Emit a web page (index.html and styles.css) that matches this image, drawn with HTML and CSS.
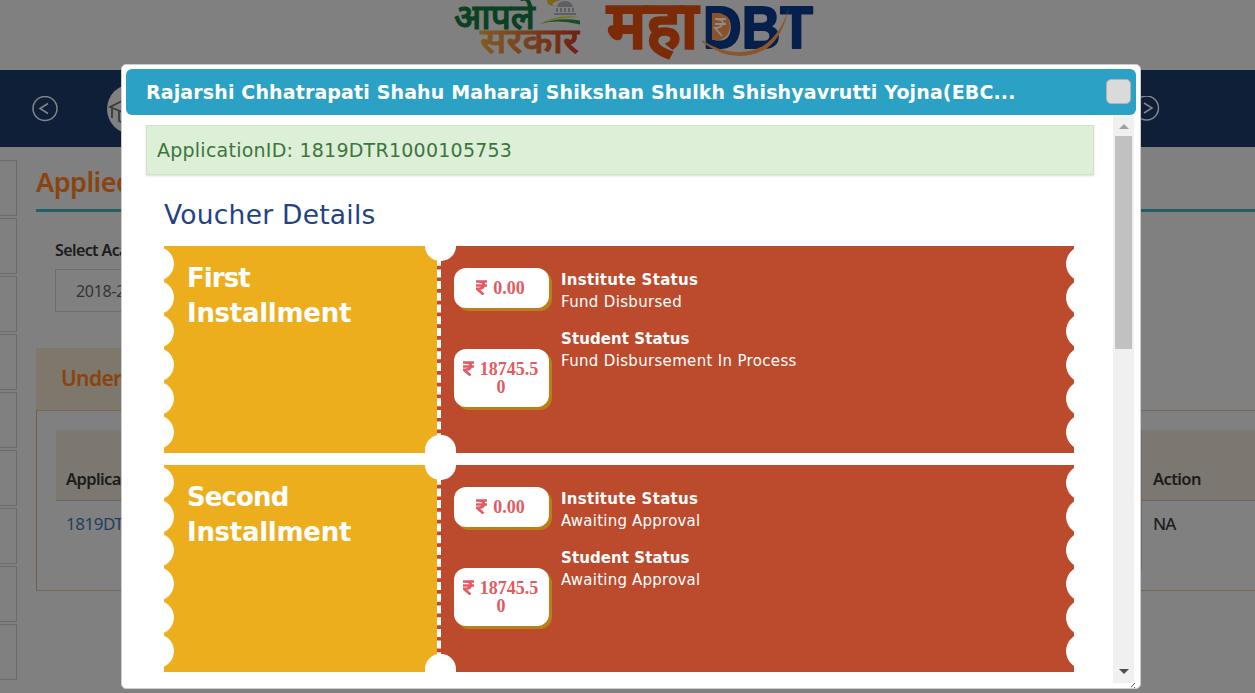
FILE: index.html
```
<!DOCTYPE html>
<html lang="en">
<head>
<meta charset="utf-8">
<title>MahaDBT - Voucher Details</title>
<link rel="stylesheet" href="styles.css">
</head>
<body>
<div class="page">
  <header class="brand">
    <svg class="brand-logo" width="370" height="70" viewBox="0 0 370 70">
      <defs>
        <linearGradient id="sarkar" x1="0" x2="1"><stop offset="0" stop-color="#805c24"/><stop offset="1" stop-color="#702014"/></linearGradient>
      </defs>
      <text class="deva" transform="translate(0 29) scale(1 1.22)" x="4" y="0" font-size="29" fill="#0b4021" stroke="#0b4021" stroke-width=".9" textLength="81" lengthAdjust="spacingAndGlyphs">आपले</text>
      <text class="deva" transform="translate(0 53) scale(1 1.26)" x="30" y="0" font-size="28" fill="url(#sarkar)" stroke="url(#sarkar)" stroke-width=".7" textLength="99" lengthAdjust="spacingAndGlyphs">सरकार</text>
      <path d="M97 0 Q97 6 104 6 Q99 3 111 0Z" fill="#7d6419"/>
      <path d="M104 15v-2h22v2zM106 12v-4h2v4zM110 12v-4h2v4zM114 12v-4h2v4zM118 12v-4h2v4zM122 12v-4h2v4zM107 7q1-6 8-6t8 6z" fill="#5d5f63"/>
      <path d="M90 24 Q107 14 130 17 Q109 17 90 24Z" fill="#76731c"/>
      <path d="M90 24 Q108 17 130 20.5 V24.500Q107 19 90 24Z" fill="#174f29"/>
      <text class="deva" transform="translate(0 48) scale(1 1.32)" x="157" y="0" font-size="50" fill="#7b2b08" stroke="#7b2b08" stroke-width="2.500" textLength="91" lengthAdjust="spacingAndGlyphs">महा</text>
      <text class="latin" x="253" y="48" font-size="59" fill="#071f4b" stroke="#071f4b" stroke-width="2" stroke-linejoin="round" textLength="110" lengthAdjust="spacingAndGlyphs">DBT</text>
      <path d="M262 13h8q10 3 10 13t-10 14h-8z" fill="#8b5129"/>
      <path d="M265 19h11M265 24h11M267 19q8 1 5 6q-2 3-7 3l7 8" fill="none" stroke="#8c8c8c" stroke-width="1.800"/>
      <path d="M252 40 Q283 61 313 46 Q332 33 339 7 Q333 37 316 49 Q284 66 252 42Z" fill="#8b552d"/>
    </svg>
  </header>
  <nav class="carousel">
    <svg class="arrow" width="26" height="26" viewBox="0 0 26 26"><circle cx="13" cy="12.500" r="12"/><path d="M16 7.500 8 12.500l8 5"/></svg>
    <span class="category"><svg width="50" height="50" viewBox="0 0 50 50"><path d="M3 23 25 12 47 23 25 32ZM5 24v10M12 27v10q12 7 26 0V27M17 25v-5"/></svg></span>
    <svg class="arrow next" width="26" height="26" viewBox="0 0 26 26"><circle cx="12.500" cy="12" r="12"/><path d="M10 7 18 12l-8 5"/></svg>
  </nav>
  <div class="body">
    <aside class="side"><i></i><i></i><i></i><i></i><i></i><i></i><i></i><i></i><i></i></aside>
    <main class="content">
      <h1>Applied Scheme</h1>
      <div class="filter">
        <label>Select Academic Year</label>
        <div class="select">2018-2019</div>
      </div>
      <h2>Under Scrutiny</h2>
      <section class="panel">
        <div class="table">
          <div class="col id"><b>Application ID</b><a>1819DTR1000105753</a></div>
          <div class="col act"><b>Action</b><span>NA</span></div>
        </div>
      </section>
    </main>
  </div>
</div>

<div class="dialog">
  <div class="titlebar"><span class="title">Rajarshi Chhatrapati Shahu Maharaj Shikshan Shulkh Shishyavrutti Yojna(EBC...</span><button class="close" aria-label="Close"></button></div>
  <div class="viewport">
    <div class="scroll">
      <div class="notice"><span>ApplicationID: 1819DTR1000105753</span></div>
      <h3>Voucher Details</h3>
      <div class="vouchers">
        <article class="voucher">
          <div class="name"><span>First</span><span class="wide">Installment</span></div>
          <div class="detail">
            <div class="row"><div class="price"><svg class="rupee" viewBox="0 0 11 15"><path d="M0 1.500h11M0 5.500h11M2 1.500q6 0 6 3.500T2 8.800H1l6.500 5.700"/></svg>0.00</div><div class="status"><b>Institute Status</b><span>Fund Disbursed</span></div></div>
            <div class="row"><div class="price low"><svg class="rupee" viewBox="0 0 11 15"><path d="M0 1.500h11M0 5.500h11M2 1.500q6 0 6 3.500T2 8.800H1l6.500 5.700"/></svg>18745.50</div><div class="status"><b class="student">Student Status</b><span>Fund Disbursement In Process</span></div></div>
          </div>
          <i class="notch top"></i><i class="notch bottom"></i>
        </article>
        <article class="voucher">
          <div class="name"><span>Second</span><span class="wide">Installment</span></div>
          <div class="detail">
            <div class="row"><div class="price"><svg class="rupee" viewBox="0 0 11 15"><path d="M0 1.500h11M0 5.500h11M2 1.500q6 0 6 3.500T2 8.800H1l6.500 5.700"/></svg>0.00</div><div class="status"><b>Institute Status</b><span class="await">Awaiting Approval</span></div></div>
            <div class="row"><div class="price low"><svg class="rupee" viewBox="0 0 11 15"><path d="M0 1.500h11M0 5.500h11M2 1.500q6 0 6 3.500T2 8.800H1l6.500 5.700"/></svg>18745.50</div><div class="status"><b class="student">Student Status</b><span class="await">Awaiting Approval</span></div></div>
          </div>
          <i class="notch top"></i><i class="notch bottom"></i>
        </article>
      </div>
    </div>
    <div class="scrollbar"><i class="up"></i><i class="thumb"></i><i class="down"></i></div>
  </div>
  <svg class="grip" width="5" height="5" viewBox="0 0 5 5"><path d="M0 4.500 3 1M3 .5h1M3 4.500h1" stroke="#555" fill="none"/></svg>
</div>
</body>
</html>
```
FILE: styles.css
```
* { box-sizing: border-box; }
body { margin: 0; width: 1255px; height: 693px; overflow: hidden; background: #808080; font-family: "DejaVu Sans", sans-serif; }
i { display: block; }
.page { height: 693px; overflow: hidden; font-family: "Noto Sans", "Open Sans", sans-serif; white-space: nowrap; }

.brand { height: 70px; padding-left: 450px; }
.brand-logo { display: block; }
.deva { font-family: "Noto Sans Devanagari", "Noto Sans", sans-serif; font-weight: 500; }
.latin { font-family: "Liberation Sans", sans-serif; font-weight: 700; }

.carousel { height: 77px; background: #101f38; display: flex; align-items: center; padding: 0 95px 0 32px; }
.arrow { fill: none; stroke: #80858c; stroke-width: 1.5; }
.arrow.next { margin-left: auto; }
.category { width: 50px; height: 50px; margin-left: 49px; border-radius: 50%; background: #808080; overflow: hidden; }
.category svg { fill: none; stroke: #363c3c; stroke-width: 1.8; display: block; }

.body { display: flex; height: 546px; }
.side { width: 17px; padding-top: 13px; display: flex; flex-direction: column; gap: 2px; }
.side i { height: 56px; border: 1px solid #6c6c6c; border-left: 0; }
.content { flex: 1; padding: 17px 0 0 19px; }
h1 { margin: 0; height: 48px; border-bottom: 3px solid #236063; color: #8b4310; font-size: 27px; line-height: 35px; font-weight: 600; letter-spacing: -.5px; }
.filter { padding: 27px 0 0 19px; height: 136px; }
.filter label { display: block; height: 30px; font-size: 16px; line-height: 22px; font-weight: 600; color: #1b1b1b; letter-spacing: -.6px; }
.select { width: 300px; height: 43px; border: 1px solid #6d6d6d; padding-left: 20px; font-size: 16px; line-height: 43px; color: #333; letter-spacing: -.3px; }
h2 { margin: 0; height: 62px; padding-left: 25px; background: #7e776c; color: #8b4310; font-size: 21px; line-height: 60px; font-weight: 600; letter-spacing: -.6px; width: 500px; }
.panel { height: 181px; border: 1px solid #77685a; border-left-color: #77584a; border-right: 0; }
.table { display: flex; justify-content: space-between; padding: 19px 0 0 19px; }
.col { height: 140px; }
.col b { display: flex; height: 71px; padding-top: 37px; background: #7c7771; border-bottom: 1px solid #6a6560; font-size: 16.500px; line-height: 24px; font-weight: 600; color: #1b1b1b; letter-spacing: -.6px; }
.col a, .col span { display: block; padding-top: 11px; font-size: 17px; line-height: 24px; color: #203f5c; letter-spacing: -.5px; }
.col.id { width: 500px; }
.col.id b, .col.id a { padding-left: 10px; }
.col.act { width: 114px; border-left: 1px solid #6e6e6e; }
.col.act b, .col.act span { padding-left: 11px; }
.col.act span { color: #202020; font-weight: 500; letter-spacing: -1px; }

.dialog { position: absolute; left: 121px; top: 64px; width: 1020px; height: 625px; background: #fff; border: 1px solid #ccc; border-radius: 5px; padding: 4px; }
.titlebar { height: 46px; border-radius: 6px; background: #2aa1c5; color: #fff; display: flex; align-items: center; justify-content: space-between; padding: 0 5px 1px 20px; font-weight: 700; font-size: 19px; letter-spacing: .135px; white-space: nowrap; }
.close { width: 25px; height: 25px; border: 1px solid #b3b3b3; border-radius: 5px; background: #dadada; padding: 0; }
.viewport { display: flex; height: 568px; }
.scroll { flex: 1; overflow: hidden; padding: 10px 19px 0 20px; }
.scrollbar { width: 21px; margin-right: 2px; background: #f0f0f0; display: flex; flex-direction: column; align-items: center; }
.up { margin-top: 9px; border: 5px solid transparent; border-top: 0; border-bottom-color: #a0a0a0; }
.thumb { margin-top: 7px; width: 17px; height: 213px; background: #c1c1c1; }
.down { margin-top: auto; margin-bottom: 9px; border: 5px solid transparent; border-bottom: 0; border-top-color: #4d4d4d; }
.grip { position: absolute; right: 4px; bottom: 0; }

.notice { height: 50px; padding-left: 10px; border: 1px solid #cfe5c4; background: #deefd8; box-shadow: 0 1px 2px #d5dfd2; color: #3c763d; font-size: 19px; line-height: 48px; letter-spacing: .24px; }
h3 { margin: 0; padding: 23px 0 0 18px; height: 71px; font-size: 26.500px; line-height: 34px; font-weight: 400; color: #1f4384; letter-spacing: .24px; }
.vouchers { padding: 0 20px 0 18px; display: flex; flex-direction: column; gap: 12px; }
.voucher { position: relative; height: 207px; display: flex; color: #fff; }
.voucher::before, .voucher::after { content: ""; position: absolute; top: 1px; height: 202px; width: 10px; background-size: 10px 33.67px; }
.voucher::before { left: 0; background-image: radial-gradient(circle at -7px 50%, #fff 16.500px, transparent 17.300px); }
.voucher::after { right: 0; background-image: radial-gradient(circle at 20px 50%, #fff 17.500px, transparent 18.300px); }
.name { width: 273px; background: #ecae1d; padding: 15px 0 0 23px; display: flex; flex-direction: column; align-items: flex-start; font-size: 26px; line-height: 35px; font-weight: 700; letter-spacing: -.9px; }
.name .wide { letter-spacing: -.28px; }
.detail { flex: 1; background: #bc4a2c; border-left: 4px dashed #fff; padding: 22px 0 0 13px; }
.row { display: flex; align-items: flex-start; gap: 12px; height: 59px; }
.price { width: 95px; padding: 11px 8px 11px 7px; border-radius: 12px; background: #fff; box-shadow: 3px 3px 0 #b98018; font: 700 18px/18px "Liberation Serif", serif; color: #e05c62; text-align: center; word-break: break-all; }
.price.low { margin-top: 22px; }
.rupee { width: 11px; height: 15px; margin: -3px 6px 0 -1px; vertical-align: -1px; fill: none; stroke: #e05c62; stroke-width: 2.600; }
.status { display: flex; flex-direction: column; align-items: flex-start; font-size: 15px; line-height: 22px; letter-spacing: .33px; padding-top: 1px; }
.status b { letter-spacing: .27px; }
.status .student { letter-spacing: .08px; }
.status .await { letter-spacing: .22px; }
.notch { position: absolute; left: 261px; width: 31px; background: #fff; }
.notch.top { top: 0; height: 15px; border-radius: 0 0 15px 15px; }
.notch.bottom { bottom: 0; height: 18px; border-radius: 15px 15px 0 0; }
```
